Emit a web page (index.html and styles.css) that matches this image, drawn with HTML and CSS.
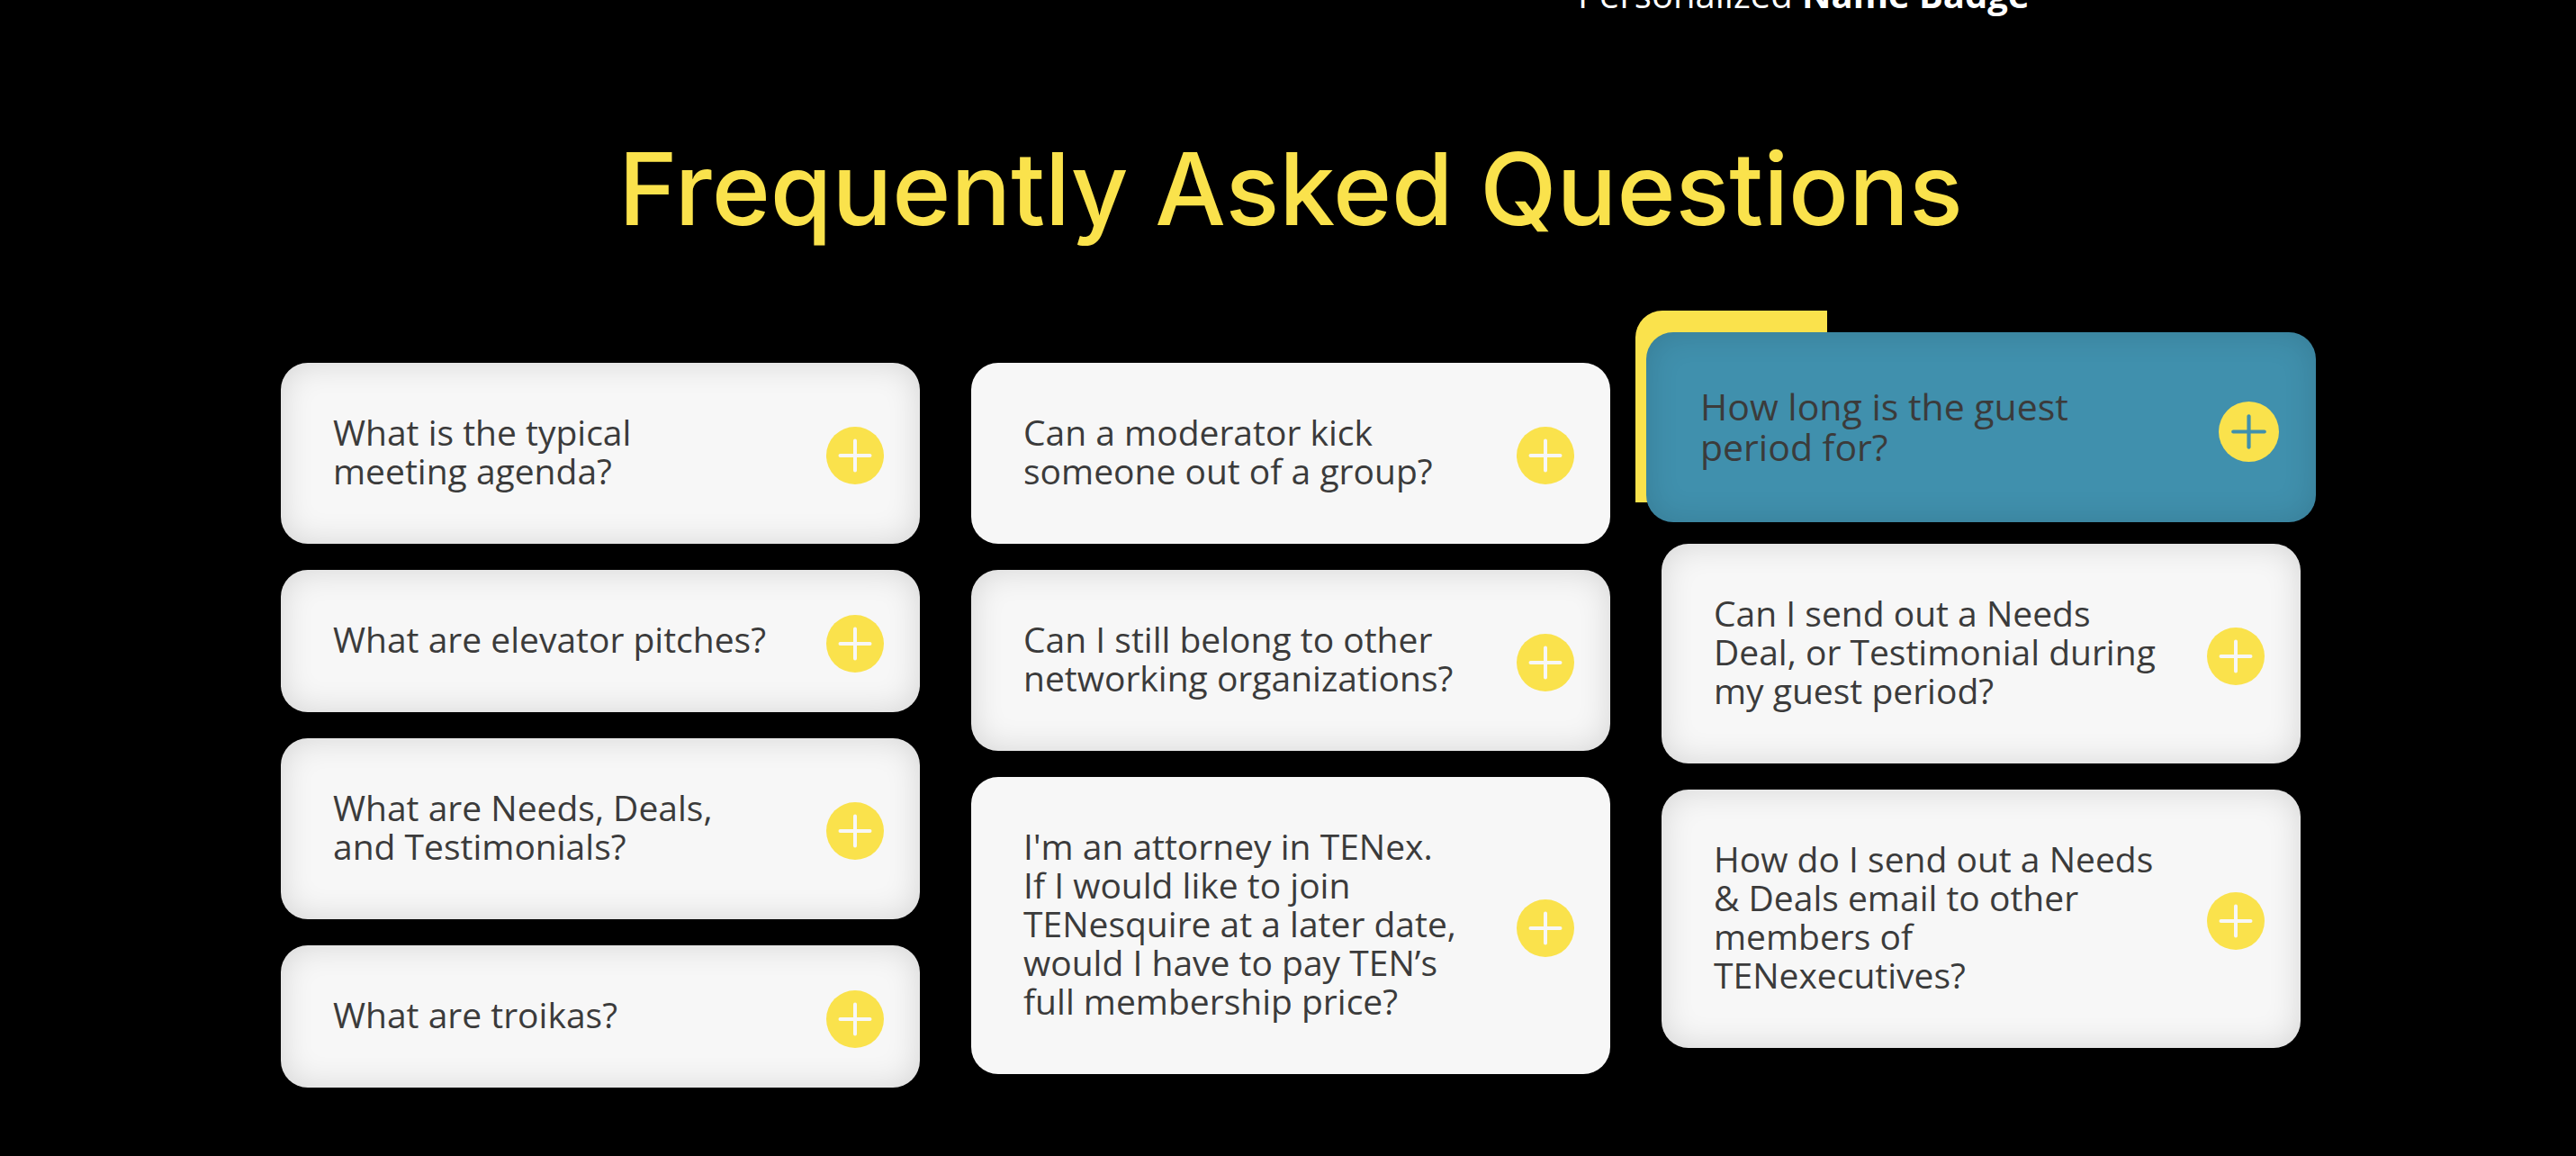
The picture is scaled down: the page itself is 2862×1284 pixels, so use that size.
FILE: index.html
```html
<!DOCTYPE html>
<html lang="en">
<head>
<meta charset="utf-8">
<meta name="viewport" content="width=device-width, initial-scale=1">
<title>Frequently Asked Questions</title>
<link rel="stylesheet" href="styles.css">
</head>
<body>
<svg class="sprite" aria-hidden="true">
  <symbol id="plus" viewBox="0 0 64 64">
    <circle class="disc" cx="32" cy="32" r="32"/>
    <path class="cross" d="M15.500 32h33M32 15.500v33"/>
  </symbol>
</svg>
<section class="perks">
  <p class="perk">Personalized <strong>Name Badge</strong></p>
</section>
<main class="faq">
  <h1 class="faq-title">Frequently Asked Questions</h1>
  <div class="columns">
    <div class="column">
      <button class="card" type="button"><span class="question">What is the typical<br>meeting agenda?</span><svg class="icon" aria-hidden="true"><use href="#plus"/></svg></button>
      <button class="card" type="button"><span class="question">What are elevator pitches?</span><svg class="icon" aria-hidden="true"><use href="#plus"/></svg></button>
      <button class="card" type="button"><span class="question">What are Needs, Deals,<br>and Testimonials?</span><svg class="icon" aria-hidden="true"><use href="#plus"/></svg></button>
      <button class="card" type="button"><span class="question">What are troikas?</span><svg class="icon" aria-hidden="true"><use href="#plus"/></svg></button>
    </div>
    <div class="column">
      <button class="card flat" type="button"><span class="question">Can a moderator kick<br>someone out of a group?</span><svg class="icon" aria-hidden="true"><use href="#plus"/></svg></button>
      <button class="card" type="button"><span class="question">Can I still belong to other<br>networking organizations?</span><svg class="icon" aria-hidden="true"><use href="#plus"/></svg></button>
      <button class="card flat" type="button"><span class="question">I'm an attorney in TENex.<br>If I would like to join<br>TENesquire at a later date,<br>would I have to pay TEN’s<br>full membership price?</span><svg class="icon" aria-hidden="true"><use href="#plus"/></svg></button>
    </div>
    <div class="column raised">
      <div class="lift"><button class="card active" type="button"><span class="question">How long is the guest<br>period for?</span><svg class="icon" aria-hidden="true"><use href="#plus"/></svg></button></div>
      <button class="card" type="button"><span class="question">Can I send out a Needs<br>Deal, or Testimonial during<br>my guest period?</span><svg class="icon" aria-hidden="true"><use href="#plus"/></svg></button>
      <button class="card" type="button"><span class="question">How do I send out a Needs<br>&amp; Deals email to other<br>members of<br>TENexecutives?</span><svg class="icon" aria-hidden="true"><use href="#plus"/></svg></button>
    </div>
  </div>
</main>
</body>
</html>
```
FILE: styles.css
```css
* { box-sizing: border-box; }

body {
  margin: 0;
  background: #000;
  color: #fff;
  font-family: "Open Sans", "Noto Sans", sans-serif;
}

.sprite { position: absolute; width: 0; height: 0; }

.perks {
  display: flex;
  align-items: flex-end;
  height: 22px;
  padding-left: 61.25%;
  overflow: hidden;
}

.perk {
  margin: 0;
  font-size: 40px;
  font-weight: 400;
  line-height: 56px;
}

.perk strong { font-weight: 700; }

.faq { padding: 112px 306px 72px 312px; }

.faq-title {
  margin: 0 0 117px;
  color: #fae24c;
  font-family: Inter, "Open Sans", sans-serif;
  font-size: 111px;
  font-weight: 500;
  line-height: 152px;
  text-align: center;
}

.columns {
  display: grid;
  grid-template-columns: repeat(3, minmax(0, 1fr));
  align-items: start;
  gap: 57px;
}

.column {
  display: flex;
  flex-direction: column;
  gap: 29px;
}

.raised { margin-top: -34px; }

.card {
  display: flex;
  align-items: center;
  justify-content: space-between;
  width: 100%;
  padding: 55px 40px 60px 58px;
  border: 0;
  border-radius: 30px;
  background: #f7f7f7;
  box-shadow: inset 0 0 36px rgba(0, 0, 0, 0.14);
  color: #3b3b3b;
  font-family: inherit;
  font-size: 39px;
  line-height: 43px;
  text-align: left;
  cursor: pointer;
}

.flat { box-shadow: none; }

/* Negative margins keep the icon from stretching one-line cards. */
.icon {
  flex: none;
  width: 64px;
  height: 64px;
  margin: -10px 0 -20px;
}

.disc { fill: #fae24c; }

.cross {
  fill: none;
  stroke: var(--cross, #f7f7f7);
  stroke-width: 4;
  stroke-linecap: round;
}

/* The lifted card grows past its column and carries a yellow corner behind it. */
.lift {
  position: relative;
  z-index: 0;
  margin: 0 -17px -5px;
}

.lift::before {
  content: "";
  position: absolute;
  z-index: -1;
  top: -24px;
  left: -12px;
  width: 213px;
  height: 213px;
  border-top-left-radius: 30px;
  background: #fae24c;
}

.active {
  --cross: #4090ad;
  padding: 60px 41px 61px 60px;
  background: #4090ad;
  font-size: 41px;
  line-height: 45px;
}

.active .icon { width: 67px; height: 67px; }
```
